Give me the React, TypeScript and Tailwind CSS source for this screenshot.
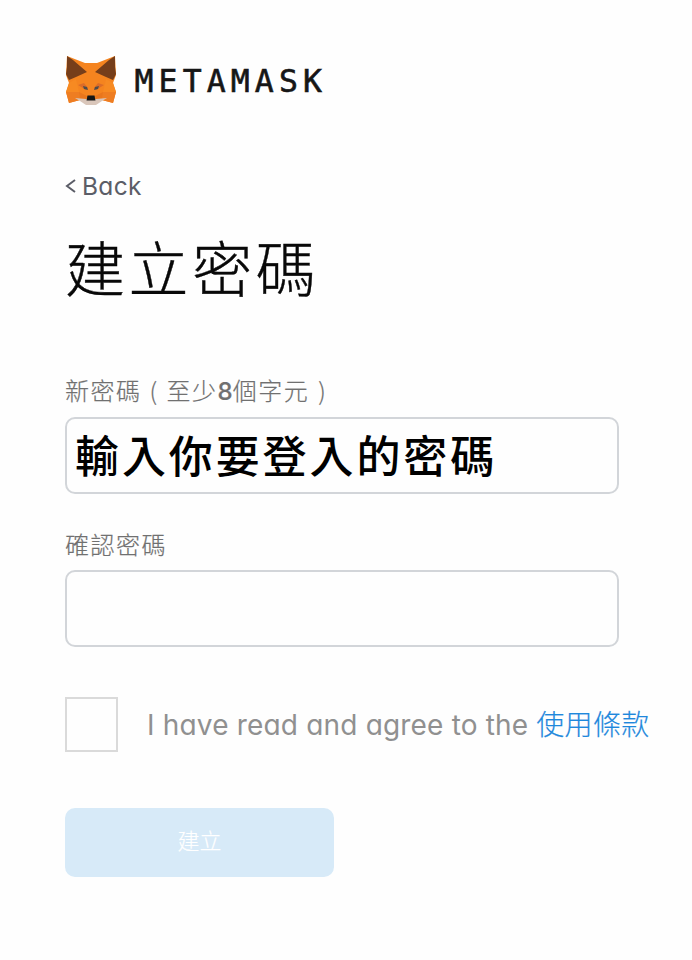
function Fox() {
  return (
    <svg className="h-[50px] w-[52px] shrink-0" viewBox="0 0 52 50" aria-hidden="true">
      <path d="M2 0 20 7H32L50 0 51 19 48 27 51 36 48 47 37 44 31 48H21L15 44 4 47 1 36 4 27 1 19Z" fill="#f5841f" />
      <path d="M2 0 8 4 22 16 11 21 4 24 1 18 2 11ZM50 0 44 4 30 16 41 21 48 24 51 18 50 11Z" fill="#763e1a" />
      <path d="M1 36H14L15 44 4 47ZM51 36H38L37 44 48 47Z" fill="#ee7d22" />
      <path d="M4 27 11 23 14 36H1ZM48 27 41 23 38 36H51Z" fill="#f78a22" />
      <path d="m13 29 6-2 4 5-2 2ZM39 29l-6-2-4 5 2 2Z" fill="#dc6c28" />
      <path d="m18 30 4 1 1 3-4-1ZM34 30l-4 1-1 3 4-1Z" fill="#4d4c4c" />
      <path d="m14 36 8 4-1 3-6 1ZM38 36l-8 4 1 3 6 1Z" fill="#e9761d" />
      <path d="m10 42 11 1h10l11-1-5 3-6 4H21l-6-4Z" fill="#d9c6ba" />
      <path d="M22.500 39.500h7l1 5h-9Z" fill="#161616" />
    </svg>
  );
}

const cjk = "font-['Noto_Sans_CJK_TC',sans-serif]";
const latin = "font-['Inter','Noto_Sans_CJK_TC',sans-serif]";

export default function App() {
  return (
    <main className="flex h-[960px] w-[692px] flex-col items-start overflow-hidden bg-[#fefefe] pl-[65px] pt-[56px]">
      <header className="flex h-[50px] items-center">
        <Fox />
        <span className="ml-[17.5px] whitespace-nowrap font-['DejaVu_Sans_Mono',monospace] text-[31.5px] leading-[50px] tracking-[5.1px] text-[#161616] [-webkit-text-stroke:0.6px_#161616]">
          METAMASK
        </span>
      </header>
      <a className={`${latin} mt-[64px] flex h-[32px] items-center text-[24.5px] leading-[32px] tracking-[0.3px] text-[#5b5d67] [font-feature-settings:'cv11']`}>
        <svg className="mr-[6px] h-[14px] w-[11px]" viewBox="0 0 11 14" fill="none" stroke="currentColor" strokeWidth="2">
          <path d="M10 1 2 7l8 6" />
        </svg>
        Back
      </a>
      <h1 className={`${cjk} mt-[19px] h-[90px] whitespace-nowrap text-[60px] font-light leading-[90px] tracking-[3.6px] text-[#080808] [-webkit-text-stroke:0.4px_#080808]`}>
        建立密碼
      </h1>
      <form className="flex flex-col items-start">
        <label className={`${cjk} mt-[63px] h-[32px] whitespace-nowrap text-[24px] font-light leading-[32px] tracking-[1.5px] text-[#707070] [-webkit-text-stroke:0.2px_#707070]`}>
          新密碼<span className="mx-[8px]">(</span>至少<b className="font-['Inter'] font-medium tracking-[0px]">8</b>個字元<span className="ml-[9px]">)</span>
        </label>
        <div className="mt-[11px] flex h-[77px] w-[554px] items-center rounded-[10px] border-2 border-[#d2d5d9] pb-[4px] pl-[8px]">
          <span className={`${cjk} whitespace-nowrap text-[44px] font-medium leading-[66px] tracking-[2.9px] text-black`}>
            輸入你要登入的密碼
          </span>
        </div>
        <label className={`${cjk} mt-[34px] h-[32px] text-[24px] font-light leading-[32px] tracking-[1.5px] text-[#707070] [-webkit-text-stroke:0.2px_#707070]`}>
          確認密碼
        </label>
        <div className="mt-[10px] h-[77px] w-[554px] rounded-[10px] border-2 border-[#d2d5d9]" />
        <div className="mt-[50px] flex h-[55px] items-center">
          <span className="h-[55px] w-[53px] border-2 border-[#dadada]" />
          <span className={`${latin} ml-[29px] whitespace-nowrap text-[28px] leading-[40px] tracking-[0.18px] text-[#909090] [font-feature-settings:'cv11']`}>
            I have read and agree to the
          </span>
          <a className={`${cjk} ml-[8px] whitespace-nowrap pb-[3px] text-[28px] font-light leading-[40px] tracking-[0.3px] text-[#1e88dc] [-webkit-text-stroke:0.2px_#1e88dc]`}>使用條款</a>
        </div>
        <button type="button" className={`${cjk} mt-[56px] h-[69px] w-[269px] rounded-[10px] bg-[#d7eaf8] pb-[7px] text-[22px] font-light text-white [-webkit-text-stroke:0.2px_#fff]`}>
          建立
        </button>
      </form>
    </main>
  );
}
